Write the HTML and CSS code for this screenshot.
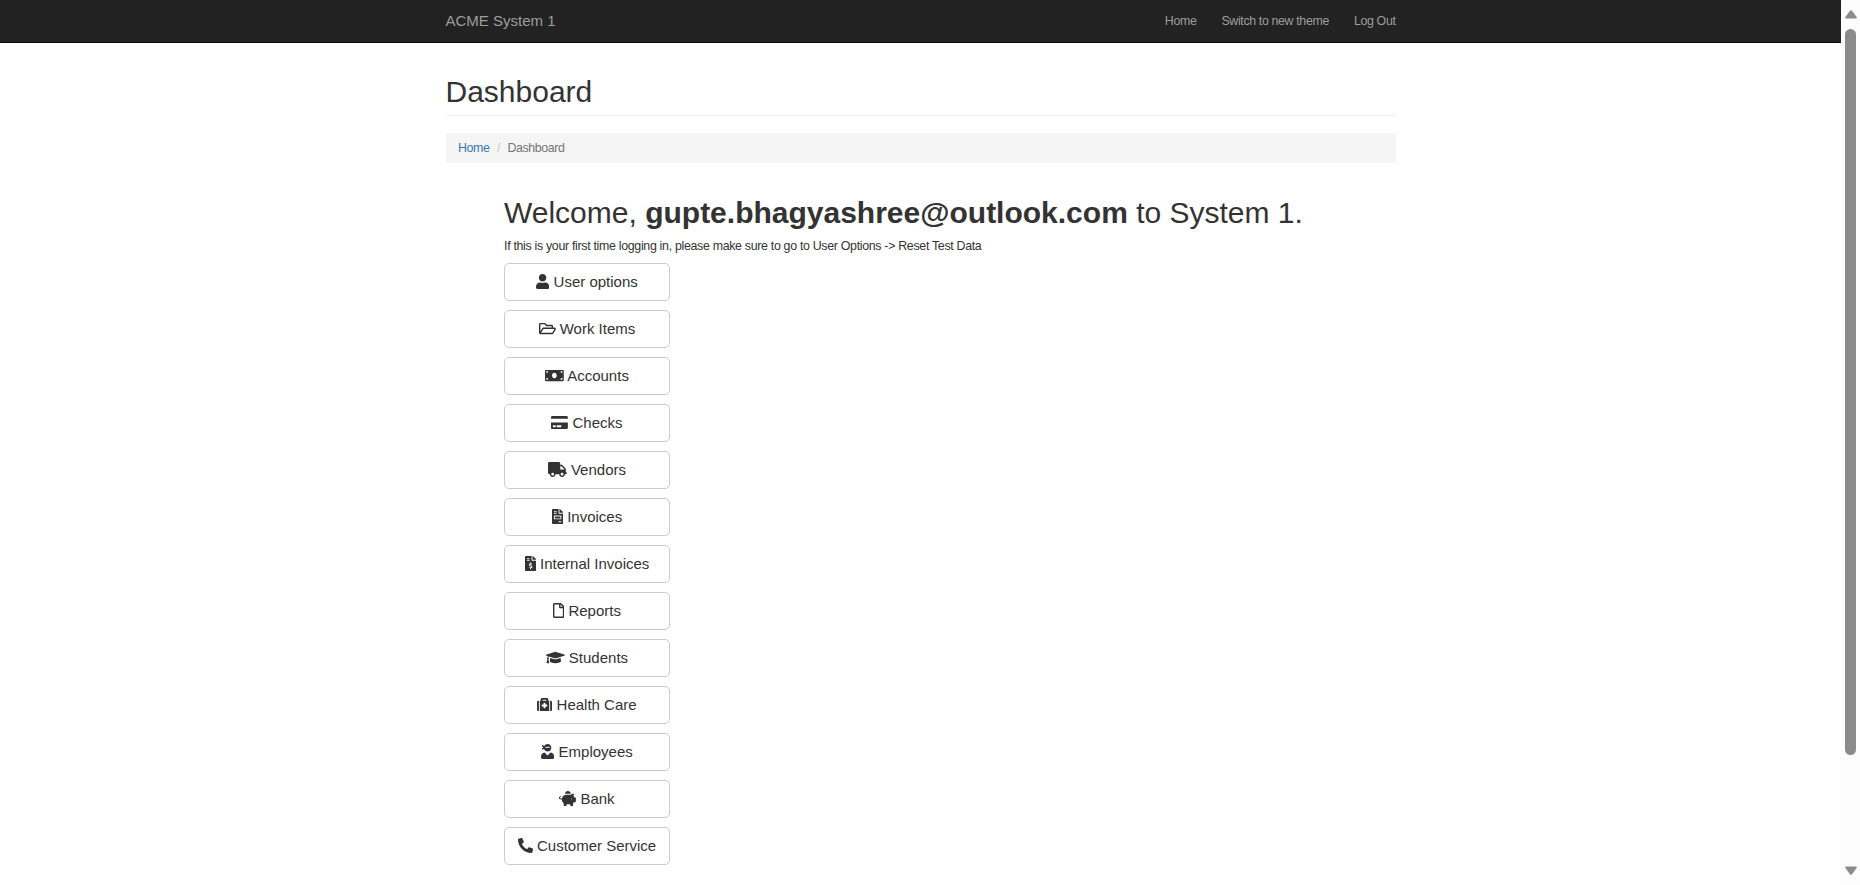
FILE: index.html
```html
<!DOCTYPE html>
<html lang="en">
<head>
<meta charset="utf-8">
<title>ACME System 1 - Dashboard</title>
<link rel="stylesheet" href="styles.css">
</head>
<body>
<div class="page">
  <nav class="navbar">
    <div class="container navbar-inner">
      <a class="brand">ACME System 1</a>
      <div class="nav-links"><a>Home</a><a>Switch to new theme</a><a>Log Out</a></div>
    </div>
  </nav>
  <main class="container">
    <h1 class="page-header">Dashboard</h1>
    <ol class="breadcrumb"><li><a class="link">Home</a></li><li class="sep">/</li><li>Dashboard</li></ol>
    <section class="content">
      <h1 class="welcome">Welcome, <b>gupte.bhagyashree@outlook.com</b> to System 1.</h1>
      <p class="hint">If this is your first time logging in, please make sure to go to User Options -&gt; Reset Test Data</p>
      <div class="menu">
        <button class="btn"><svg class="icon w448" viewBox="0 0 448 512"><path d="M224 256c70.7 0 128-57.3 128-128S294.7 0 224 0 96 57.3 96 128s57.3 128 128 128zm89.6 32h-16.7c-22.2 10.2-46.9 16-72.9 16s-50.6-5.8-72.9-16h-16.7C60.2 288 0 348.2 0 422.4V464c0 26.5 21.5 48 48 48h352c26.5 0 48-21.5 48-48v-41.6c0-74.2-60.2-134.4-134.4-134.4z"/></svg> User options</button>
        <button class="btn"><svg class="icon w576" viewBox="0 0 576 512"><path d="M527.9 224H480v-48c0-26.5-21.5-48-48-48H272l-64-64H48C21.5 64 0 85.5 0 112v288c0 26.5 21.5 48 48 48h400c16.5 0 31.9-8.5 40.7-22.6l79.9-128c20-31.9-3-73.4-40.7-73.4zM48 118c0-3.3 2.7-6 6-6h134.1l64 64H426c3.3 0 6 2.7 6 6v42H152c-16.8 0-32.4 8.8-41.1 23.2L48 351.4zm400 282H72l77.2-128H528z"/></svg> Work Items</button>
        <button class="btn"><svg class="icon w640" viewBox="0 0 640 512"><path d="M608 64H32C14.33 64 0 78.33 0 96v320c0 17.67 14.33 32 32 32h576c17.67 0 32-14.33 32-32V96c0-17.67-14.33-32-32-32zM48 400v-64c35.35 0 64 28.65 64 64H48zm0-224v-64h64c0 35.35-28.65 64-64 64zm272 176c-44.19 0-80-42.99-80-96 0-53.02 35.82-96 80-96s80 42.98 80 96c0 53.03-35.83 96-80 96zm272 48h-64c0-35.35 28.65-64 64-64v64zm0-224c-35.35 0-64-28.65-64-64h64v64z"/></svg> Accounts</button>
        <button class="btn"><svg class="icon w576" viewBox="0 0 576 512"><path d="M0 432c0 26.5 21.5 48 48 48h480c26.5 0 48-21.5 48-48V256H0v176zm192-68c0-6.6 5.4-12 12-12h136c6.6 0 12 5.4 12 12v40c0 6.6-5.4 12-12 12H204c-6.6 0-12-5.4-12-12v-40zm-128 0c0-6.6 5.4-12 12-12h72c6.6 0 12 5.4 12 12v40c0 6.6-5.4 12-12 12H76c-6.6 0-12-5.4-12-12v-40zM576 80v48H0V80c0-26.5 21.5-48 48-48h480c26.5 0 48 21.5 48 48z"/></svg> Checks</button>
        <button class="btn"><svg class="icon w640" viewBox="0 0 640 512"><path d="M624 352h-16V243.9c0-12.7-5.1-24.9-14.1-33.9L494 110.1c-9-9-21.2-14.1-33.9-14.1H416V48c0-26.5-21.5-48-48-48H48C21.5 0 0 21.5 0 48v320c0 26.5 21.5 48 48 48h16c0 53 43 96 96 96s96-43 96-96h128c0 53 43 96 96 96s96-43 96-96h48c8.8 0 16-7.2 16-16v-32c0-8.8-7.2-16-16-16zM160 464c-26.5 0-48-21.5-48-48s21.5-48 48-48 48 21.5 48 48-21.5 48-48 48zm320 0c-26.5 0-48-21.5-48-48s21.5-48 48-48 48 21.5 48 48-21.5 48-48 48zm80-208H416V144h44.1l99.9 99.9V256z"/></svg> Vendors</button>
        <button class="btn"><svg class="icon w384" viewBox="0 0 384 512"><path d="M288 256H96v64h192v-64zm89-151L279.1 7c-4.5-4.5-10.6-7-17-7H256v128h128v-6.1c0-6.3-2.5-12.4-7-16.9zm-153 31V0H24C10.7 0 0 10.7 0 24v464c0 13.3 10.7 24 24 24h336c13.3 0 24-10.7 24-24V160H248c-13.2 0-24-10.8-24-24zM64 72c0-4.42 3.58-8 8-8h80c4.42 0 8 3.58 8 8v16c0 4.42-3.58 8-8 8H72c-4.42 0-8-3.58-8-8V72zm0 64c0-4.42 3.58-8 8-8h80c4.42 0 8 3.58 8 8v16c0 4.42-3.58 8-8 8H72c-4.42 0-8-3.58-8-8v-16zm256 304c0 4.42-3.58 8-8 8h-80c-4.42 0-8-3.58-8-8v-16c0-4.42 3.58-8 8-8h80c4.42 0 8 3.58 8 8v16zm0-200v96c0 8.84-7.16 16-16 16H80c-8.84 0-16-7.16-16-16v-96c0-8.84 7.16-16 16-16h224c8.84 0 16 7.16 16 16z"/></svg> Invoices</button>
        <button class="btn"><svg class="icon w384" viewBox="0 0 384 512"><path d="M377 105L279.1 7c-4.5-4.5-10.6-7-17-7H256v128h128v-6.1c0-6.3-2.5-12.4-7-16.9zm-153 31V0H24C10.7 0 0 10.7 0 24v464c0 13.3 10.7 24 24 24h336c13.3 0 24-10.7 24-24V160H248c-13.2 0-24-10.8-24-24zM64 72c0-4.42 3.58-8 8-8h80c4.42 0 8 3.58 8 8v16c0 4.42-3.58 8-8 8H72c-4.42 0-8-3.58-8-8V72zm0 80v-16c0-4.42 3.58-8 8-8h80c4.42 0 8 3.58 8 8v16c0 4.42-3.58 8-8 8H72c-4.42 0-8-3.58-8-8zm144 263.88V440c0 4.42-3.58 8-8 8h-16c-4.42 0-8-3.58-8-8v-24.29c-11.29-.58-22.27-4.52-31.37-11.35-3.9-2.93-4.1-8.77-.57-12.14l11.75-11.21c2.77-2.64 6.89-2.76 10.13-.73 3.87 2.42 8.26 3.72 12.82 3.72h28.11c6.5 0 11.8-5.92 11.8-13.19 0-5.95-3.61-11.19-8.77-12.73l-45-13.5c-18.59-5.58-31.58-23.42-31.58-43.39 0-24.52 19.05-44.44 42.67-45.07V232c0-4.42 3.58-8 8-8h16c4.42 0 8 3.58 8 8v24.29c11.29.58 22.27 4.51 31.37 11.35 3.9 2.93 4.1 8.77.57 12.14l-11.75 11.21c-2.77 2.64-6.89 2.76-10.13.73-3.87-2.43-8.26-3.72-12.82-3.72h-28.11c-6.5 0-11.8 5.92-11.8 13.19 0 5.95 3.61 11.19 8.77 12.73l45 13.5c18.59 5.58 31.58 23.42 31.58 43.39 0 24.53-19.05 44.44-42.67 45.07z"/></svg> Internal Invoices</button>
        <button class="btn"><svg class="icon w384" viewBox="0 0 384 512"><path d="M369.9 97.9L286 14C277 5 264.8-.1 252.1-.1H48C21.5 0 0 21.5 0 48v416c0 26.5 21.5 48 48 48h288c26.5 0 48-21.5 48-48V131.9c0-12.7-5.1-25-14.1-34zM332.1 128H256V51.9l76.1 76.1zM48 464V48h160v104c0 13.3 10.7 24 24 24h104v288H48z"/></svg> Reports</button>
        <button class="btn"><svg class="icon w640" viewBox="0 0 640 512"><path d="M622.34 153.2L343.4 67.5c-15.2-4.67-31.6-4.67-46.79 0L17.66 153.2c-23.54 7.23-23.54 38.36 0 45.59l48.63 14.94c-10.67 13.19-17.23 29.28-17.88 46.9C38.78 266.15 32 276.11 32 288c0 10.78 5.68 19.85 13.86 25.65L20.33 428.53C18.11 438.52 25.71 448 35.94 448h56.11c10.24 0 17.84-9.48 15.62-19.47L82.14 313.65C90.32 307.85 96 298.78 96 288c0-11.57-6.47-21.25-15.66-26.87.76-15.02 8.44-28.3 20.69-36.72L296.6 284.5c9.06 2.78 26.44 6.25 46.79 0l278.95-85.7c23.55-7.24 23.55-38.36 0-45.6zM352.79 315.09c-28.53 8.76-52.84 3.92-65.59 0l-145.02-44.55L128 384c0 35.35 85.96 64 192 64s192-28.65 192-64l-14.18-113.47-145.03 44.56z"/></svg> Students</button>
        <button class="btn"><svg class="icon w512" viewBox="0 0 512 512"><path d="M96 480h320V128h-32V80c0-26.51-21.49-48-48-48H176c-26.51 0-48 21.49-48 48v48H96v352zm96-384h128v32H192V96zm320 80v256c0 26.51-21.49 48-48 48h-16V128h16c26.51 0 48 21.49 48 48zM64 480H48c-26.51 0-48-21.49-48-48V176c0-26.51 21.49-48 48-48h16v352zm288-208v32c0 8.837-7.163 16-16 16h-48v48c0 8.837-7.163 16-16 16h-32c-8.837 0-16-7.163-16-16v-48h-48c-8.837 0-16-7.163-16-16v-32c0-8.837 7.163-16 16-16h48v-48c0-8.837 7.163-16 16-16h32c8.837 0 16 7.163 16 16v48h48c8.837 0 16 7.163 16 16z"/></svg> Health Care</button>
        <button class="btn"><svg class="icon w448" viewBox="0 0 448 512"><path d="M325.4 289.2L224 390.6 122.6 289.2C54 295.3 0 352.2 0 422.4V464c0 26.5 21.5 48 48 48h352c26.5 0 48-21.5 48-48v-41.6c0-70.2-54-127.1-122.6-133.2zM32 192c27.3 0 51.8-11.5 69.2-29.7 15.1 53.9 64 93.7 122.8 93.7 70.7 0 128-57.3 128-128S294.7 0 224 0c-50.4 0-93.6 29.4-114.5 71.8C92.1 47.8 64 32 32 32c0 33.4 17.1 62.8 43.1 80-26 17.2-43.1 46.6-43.1 80zm144-96h96c17.7 0 32 14.3 32 32H144c0-17.7 14.3-32 32-32z"/></svg> Employees</button>
        <button class="btn"><svg class="icon w576" viewBox="0 0 576 512"><path d="M560 224h-29.5c-8.8-20-21.6-37.7-37.4-52.5L512 96h-32c-29.4 0-55.4 13.5-73 34.3-7.6-1.1-15.1-2.3-23-2.3H256c-77.4 0-141.9 55-156.8 128H56c-14.8 0-26.5-13.5-23.5-28.8C34.7 215.8 45.4 208 57 208h1c3.3 0 6-2.7 6-6v-20c0-3.3-2.7-6-6-6-28.5 0-53.9 20.4-57.5 48.6C-3.9 258.8 22.7 288 56 288h40c0 52.2 25.4 98.1 64 127.3V496c0 8.8 7.2 16 16 16h64c8.8 0 16-7.2 16-16v-48h128v48c0 8.8 7.2 16 16 16h64c8.8 0 16-7.2 16-16v-80.7c11.8-8.9 22.3-19.4 31.3-31.3H560c8.8 0 16-7.2 16-16V240c0-8.8-7.2-16-16-16zm-128 64c-8.8 0-16-7.2-16-16s7.2-16 16-16 16 7.2 16 16-7.2 16-16 16zM256 96h128c5.4 0 10.7.4 15.9.8 0-.3.1-.5.1-.8 0-53-43-96-96-96s-96 43-96 96c0 2.1.5 4.1.6 6.2 15.2-3.9 31-6.2 47.4-6.2z"/></svg> Bank</button>
        <button class="btn"><svg class="icon w512" viewBox="0 0 512 512"><path transform="matrix(-1 0 0 1 512 0)" d="M493.4 24.6l-104-24c-11.3-2.6-22.9 3.3-27.5 13.9l-48 112c-4.2 9.8-1.4 21.3 6.9 28l60.6 49.6c-36 76.7-98.9 140.5-177.2 177.2l-49.6-60.6c-6.8-8.3-18.2-11.1-28-6.9l-112 48C3.9 366.5-2 378.1.6 389.4l24 104C27.1 504.2 36.7 512 48 512c256.1 0 464-207.5 464-464 0-11.2-7.7-20.9-18.6-23.4z"/></svg> Customer Service</button>
      </div>
    </section>
  </main>
</div>
<div class="scrollbar">
  <svg class="arrow" viewBox="0 0 12 9"><path d="M5 .8Q6-.2 7 .8L11.6 7Q12 8.500 10.800 8.500H1.200Q0 8.500 .4 7Z"/></svg>
  <div class="thumb"></div>
  <svg class="arrow arrow-down" viewBox="0 0 12 9"><path d="M5 8.200Q6 9.200 7 8.200L11.600 2Q12 .5 10.800 .5H1.200Q0 .5 .4 2Z"/></svg>
</div>
</body>
</html>
```
FILE: styles.css
```css
* { box-sizing: border-box; }
body {
  margin: 0;
  height: 885px;
  overflow: hidden;
  display: flex;
  background: #fff;
  color: #333;
  font: 12.4px/17px "Liberation Sans", Arial, sans-serif;
  letter-spacing: -.315px;
}
.page { flex: 1; }
.container { width: 950px; margin: 0 auto; }
.navbar { height: 43px; background: #222; border-bottom: 1px solid #080808; }
.navbar-inner { height: 42px; display: flex; align-items: center; justify-content: space-between; color: #9d9d9d; }
.brand { padding-bottom: 1px; font-size: 15px; letter-spacing: 0; }
.nav-links { display: flex; gap: 25px; letter-spacing: -.36px; }
.page-header {
  margin: 32px 0 17px;
  padding: 0 0 7px;
  height: 41px;
  border-bottom: 1px solid #eee;
  font-size: 30px;
  line-height: 33px;
  font-weight: 400;
  letter-spacing: 0;
}
.breadcrumb {
  display: flex;
  align-items: center;
  list-style: none;
  margin: 0;
  padding: 0 12.5px;
  height: 30px;
  background: #f5f5f5;
  border-radius: 3px;
  color: #777;
  letter-spacing: -.4px;
}
.link { color: #337ab7; }
.sep { padding: 0 7.5px; color: #ccc; }
.content { padding: 33px 0 0 58.5px; }
.welcome { margin: 0; font-size: 30px; line-height: 33px; font-weight: 400; letter-spacing: 0; white-space: nowrap; }
.hint { margin: 9px 0 8px; }
.menu { display: flex; flex-direction: column; gap: 9px; width: 166px; }
.btn {
  height: 38px;
  padding: 0;
  border: 1px solid #ccc;
  border-radius: 5px;
  background: #fff;
  color: #333;
  font: 15px/20px "Liberation Sans", Arial, sans-serif;
  letter-spacing: 0;
  white-space: nowrap;
}
.icon { height: 15px; fill: currentColor; vertical-align: -2px; }
.w384 { width: 11.250px; }
.w448 { width: 13.125px; }
.w512 { width: 15px; }
.w576 { width: 16.875px; }
.w640 { width: 18.750px; }
.scrollbar {
  width: 19px;
  height: 885px;
  padding: 10px 4px;
  background: #fcfcfc;
  display: flex;
  flex-direction: column;
  align-items: center;
}
.arrow { width: 12px; height: 9px; fill: #8b8b8b; }
.thumb { width: 11px; height: 726px; margin-top: 10px; border-radius: 6px; background: #8b8b8b; }
.arrow-down { margin-top: auto; }
```
